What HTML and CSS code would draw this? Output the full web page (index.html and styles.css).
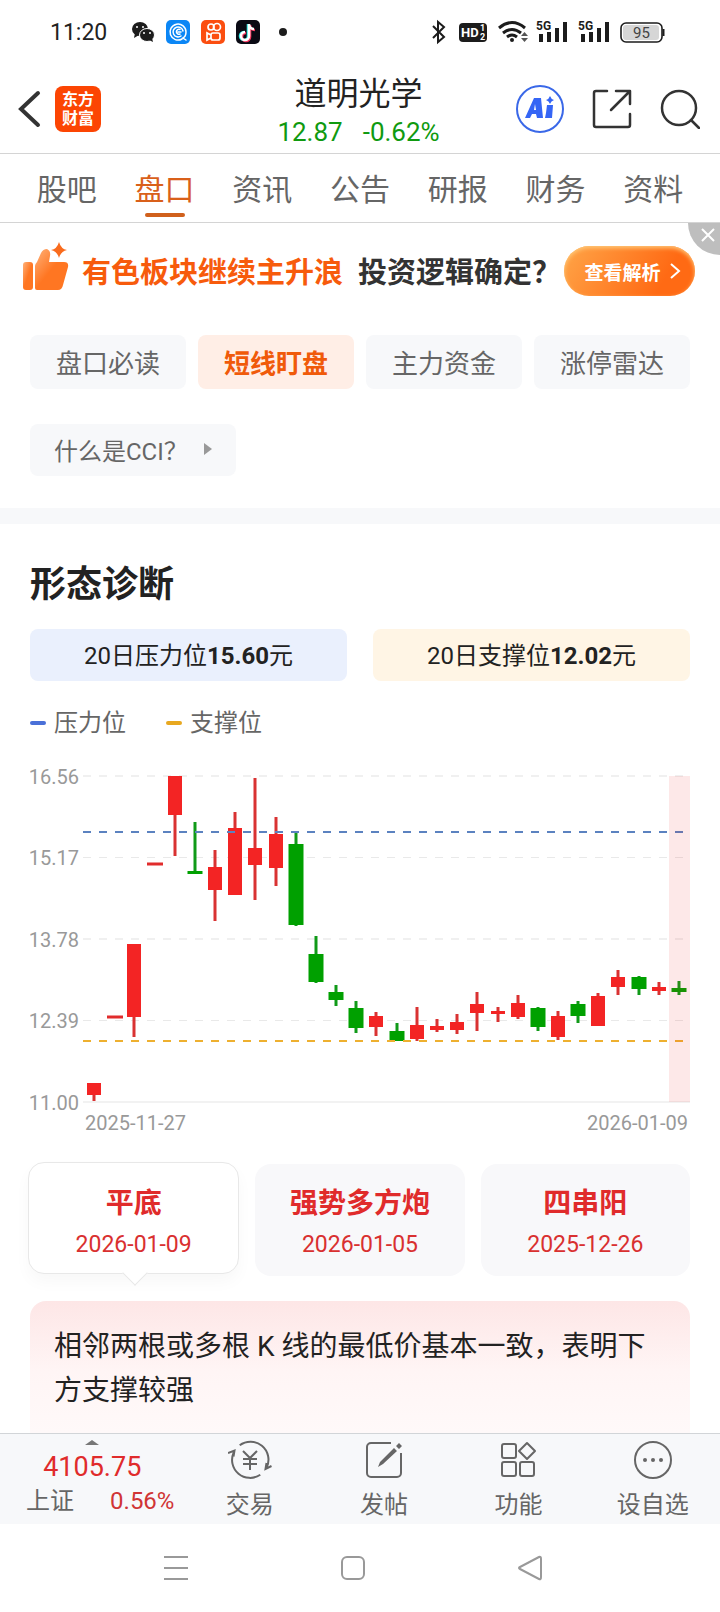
FILE: index.html
```html
<!DOCTYPE html>
<html lang="zh-CN">
<head>
<meta charset="utf-8">
<meta name="viewport" content="width=device-width, initial-scale=1">
<title>道明光学</title>
<link rel="stylesheet" href="styles.css">
</head>
<body>
<div class="app">
  <div class="status">
    <time class="status-time">11:20</time>
    <svg class="status-apps" viewBox="0 0 156 32" width="156" height="32" aria-hidden="true">
      <ellipse cx="8" cy="13" rx="8" ry="7" fill="#1c1c1c"/>
      <path d="M3 17l-1 5 5-3z" fill="#1c1c1c"/>
      <ellipse cx="15" cy="19" rx="7.500" ry="6.500" fill="#1c1c1c" stroke="#fff"/>
      <path d="M17 24l4 2-1-4z" fill="#1c1c1c"/>
      <g fill="#fff"><circle cx="5" cy="11" r="1"/><circle cx="11" cy="11" r="1"/><circle cx="12" cy="17" r="1"/><circle cx="18" cy="17" r="1"/></g>
      <rect x="34" y="4" width="24" height="24" rx="5" fill="#0b86f5"/>
      <g fill="none" stroke="#fff" stroke-width="1.500" stroke-linecap="round">
        <path d="M50 23a8 8 0 1 1 4-7c0 3-1 5-3 6l3 2"/>
        <path d="M49 20a5 5 0 1 1 2-5"/>
        <path d="M48 13.500a2.500 2.500 0 1 0 0 4.500M46 16h3"/>
      </g>
      <rect x="69" y="4" width="24" height="24" rx="5" fill="#fb4e10"/>
      <g fill="none" stroke="#fff" stroke-width="1.700">
        <circle cx="79" cy="11" r="3"/><circle cx="85" cy="11" r="3.500"/>
        <rect x="79" y="17" width="9" height="7" rx="2"/>
        <path d="M79 19l-4-2v7l4-2"/>
      </g>
      <rect x="104" y="4" width="24" height="24" rx="5" fill="#0a0a14"/>
      <g fill="none" stroke-width="2.600">
        <path d="M116 8v12a4 4 0 1 1-4-4M116 8c0 3 2 5 5 5" stroke="#25e4e0"/>
        <path d="M118 9v12a4 4 0 1 1-4-4M118 9c0 3 2 5 5 5" stroke="#f6325c"/>
        <path d="M117 8v12a4 4 0 1 1-4-4M117 8c0 3 2 5 5 5" stroke="#fff"/>
      </g>
      <circle cx="151" cy="16" r="4" fill="#1c1c1c"/>
    </svg>
    <svg class="status-system" viewBox="0 0 236 32" width="236" height="32" role="img" aria-label="蓝牙 HD Wi-Fi 5G 电量 95">
      <path d="M3 10l11 11-6 5V6l6 5L3 22" fill="none" stroke="#1c1c1c" stroke-width="2"/>
      <rect x="29" y="7" width="28" height="19" rx="4" fill="#1c1c1c"/>
      <text x="31" y="21" class="s-hd">HD</text>
      <text x="50" y="15" class="s-sub">1</text><text x="50" y="24" class="s-sub">2</text>
      <g fill="none" stroke="#1c1c1c" stroke-width="3">
        <path d="M69 12q13-11 26 0"/><path d="M73 17q9-7 18 0"/><path d="M77 21q5-4 10 0"/>
      </g>
      <circle cx="82" cy="24" r="2" fill="#1c1c1c"/>
      <path d="M91 20l3.500-4 3.500 4zM91 22l3.500 4 3.500-4z" fill="#555"/>
      <g fill="#1c1c1c">
        <text x="106" y="14" class="s-5g">5G</text>
        <path d="M109 18h4v8h-4zM117 16h4v10h-4zM125 12h4v14h-4zM133 6h4v20h-4z"/>
        <text x="148" y="14" class="s-5g">5G</text>
        <path d="M151 18h4v8h-4zM159 16h4v10h-4zM167 12h4v14h-4zM175 6h4v20h-4z"/>
      </g>
      <rect x="191" y="7" width="41" height="19" rx="5" fill="#fff" stroke="#1c1c1c" stroke-width="1.600"/>
      <rect x="193" y="9" width="36" height="15" rx="3" fill="#d6d6d6"/>
      <path d="M233.500 13v7" stroke="#1c1c1c" stroke-width="2"/>
      <text x="203" y="22" class="s-bat">95</text>
    </svg>
  </div>

  <header class="header">
    <div class="header-side">
      <button class="icon-btn" aria-label="返回">
        <svg viewBox="0 0 24 38" width="24" height="38"><path d="M21 3L4 19l17 16" fill="none" stroke="#333" stroke-width="4" stroke-linecap="round"/></svg>
      </button>
      <a class="logo" href="#"><span>东方</span><span>财富</span></a>
    </div>
    <div class="stock">
      <h1 class="stock-name">道明光学</h1>
      <p class="stock-quote"><span>12.87</span><span>-0.62%</span></p>
    </div>
    <div class="header-side header-actions">
      <button class="icon-btn" aria-label="Ai">
        <svg viewBox="0 0 48 48" width="48" height="48">
          <circle cx="24" cy="24" r="23" fill="#fff" stroke="#3a68e8" stroke-width="2"/>
          <path d="M9 33L18 13h7l2 20h-6l-1-4h-4l-2 4zM18 25h2l-1-6z" fill="#3565f5" fill-rule="evenodd"/>
          <path d="M31 20h6l-1 13h-7l1-5z" fill="#3565f5"/>
          <path d="M34 11q1 3 4 4-3 1-4 4-1-3-4-4 3-1 4-4z" fill="#3565f5"/>
        </svg>
      </button>
      <button class="icon-btn" aria-label="分享">
        <svg viewBox="0 0 40 40" width="40" height="40" fill="none" stroke="#333" stroke-width="2.500" stroke-linecap="round" stroke-linejoin="round">
          <path d="M15 2H4a2 2 0 0 0-2 2v32a2 2 0 0 0 2 2h32a2 2 0 0 0 2-2V25M24 2h14v13M37 3L19 21"/>
        </svg>
      </button>
      <button class="icon-btn" aria-label="搜索">
        <svg viewBox="0 0 40 40" width="40" height="40" fill="none" stroke="#333" stroke-width="2.500" stroke-linecap="round">
          <circle cx="19" cy="19" r="17"/><path d="M31 31l8 8"/>
        </svg>
      </button>
    </div>
  </header>

  <nav class="tabs">
    <a class="tab" href="#">股吧</a>
    <a class="tab tab-on" href="#">盘口</a>
    <a class="tab" href="#">资讯</a>
    <a class="tab" href="#">公告</a>
    <a class="tab" href="#">研报</a>
    <a class="tab" href="#">财务</a>
    <a class="tab" href="#">资料</a>
  </nav>

  <section class="banner">
    <svg class="banner-icon" viewBox="0 0 48 50" width="48" height="50" aria-hidden="true">
      <defs>
        <linearGradient id="thumb" x1="0" y1="0" x2="1" y2="1"><stop offset="0" stop-color="#ffb27a"/><stop offset=".5" stop-color="#ff7622"/></linearGradient>
      </defs>
      <rect x="1" y="21" width="10" height="28" rx="3" fill="url(#thumb)"/>
      <path d="M13 25q0-2 2-4l4-9q2-4 6-4 4 2 3 7l-1 6h15q5 0 4 5l-5 18q-1 5-5 5H15q-2 0-2-2z" fill="url(#thumb)"/>
      <path d="M37 1q2 7 8 8-6 1-8 8-2-7-8-8 6-1 8-8z" fill="#f96b1d"/>
    </svg>
    <p class="banner-text"><strong class="banner-hot">有色板块继续主升浪</strong><strong>投资逻辑确定？</strong></p>
    <button class="banner-btn">查看解析
      <svg viewBox="0 0 12 16" width="12" height="16" fill="none" stroke="#fff" stroke-width="2" aria-hidden="true"><path d="M2 1l8 7-8 7"/></svg>
    </button>
    <button class="banner-close" aria-label="关闭">
      <svg viewBox="0 0 14 14" width="14" height="14" stroke="#fff" stroke-width="2"><path d="M1 1l12 12M13 1L1 13"/></svg>
    </button>
  </section>

  <main class="main">
    <div class="pills">
      <button class="pill">盘口必读</button>
      <button class="pill pill-on">短线盯盘</button>
      <button class="pill">主力资金</button>
      <button class="pill">涨停雷达</button>
    </div>
    <button class="question">什么是CCI？
      <svg viewBox="0 0 8 12" width="8" height="12" aria-hidden="true"><path d="M0 0l8 6-8 6z" fill="#999"/></svg>
    </button>

    <section class="diagnosis">
      <h2 class="title">形态诊断</h2>
      <div class="levels">
        <p class="level level-high">20日压力位<b>15.60</b>元</p>
        <p class="level level-low">20日支撑位<b>12.02</b>元</p>
      </div>
      <div class="legend">
        <span class="key key-high">压力位</span>
        <span class="key key-low">支撑位</span>
      </div>

      <svg class="chart" viewBox="0 0 660 380" role="img" aria-label="K线图">
        <g stroke="#e9e9e9" stroke-width="1" stroke-dasharray="8 8">
          <path d="M53 16H660" stroke-width="2" stroke="#f0f0f0"/><path d="M53 97.500H660"/><path d="M53 179H660" stroke-width="2" stroke="#f0f0f0"/><path d="M53 260.500H660"/>
        </g>
        <path d="M53 342H660" stroke="#f2f2f2" stroke-width="2"/>
        <path stroke="#d93232" stroke-width="3" d="M64 335V341M104 257V277M145 55V96M185 90V161M205 52V68M225 18V140M246 57V126M346 252V276M387 247V281M407 259V272M427 254V274M447 232V271M468 247V262M488 235V259M528 251V280M568 233V236M588 210V235M629 222V235"/>
        <path stroke="#f32424" stroke-width="14" d="M64 323V335M104 184V257M145 16V55M185 107V130M205 68V135M225 88V105M246 74V108M346 256V267M387 265V279M407 266V270M427 262V270M447 244V253M468 251V254M488 243V257M528 256V277M568 236V266M588 217V227M629 227V231"/>
        <path stroke="#e12c2c" stroke-width="3" d="M77 257H93M117 104H133"/>
        <path stroke="#109a18" stroke-width="3" d="M165 62V113M266 72V166M286 176V223M306 225V246M326 241V273M367 263V281M508 247V271M548 241V263M609 216V235M649 221V235"/>
        <path stroke="#00a000" stroke-width="15" d="M165 111V114M266 84V165M286 194V222M306 232V240M326 248V268M367 271V281M508 248V267M548 244V256M609 217V229M649 228V232"/>
        <path stroke="#5b82c0" stroke-width="2" stroke-dasharray="8 8" d="M53 72H660"/>
        <path stroke="#eeb030" stroke-width="2" stroke-dasharray="8 8" d="M53 281H660"/>
        <rect x="639" y="16" width="21" height="326" fill="#f02020" fill-opacity=".1"/>
        <g class="axis" text-anchor="end">
          <text x="49" y="24">16.56</text><text x="49" y="105">15.17</text><text x="49" y="187">13.78</text><text x="49" y="268">12.39</text><text x="49" y="350">11.00</text>
          <text x="658" y="370">2026-01-09</text>
        </g>
        <text class="axis" x="55" y="370">2025-11-27</text>
      </svg>

      <div class="patterns">
        <button class="pattern pattern-on"><b>平底</b><time>2026-01-09</time></button>
        <button class="pattern"><b>强势多方炮</b><time>2026-01-05</time></button>
        <button class="pattern"><b>四串阳</b><time>2025-12-26</time></button>
      </div>
      <p class="note">相邻两根或多根 K 线的最低价基本一致，表明下方支撑较强</p>
    </section>
  </main>

  <footer class="toolbar">
    <button class="index">
      <svg class="index-caret" viewBox="0 0 14 5" width="14" height="5" aria-hidden="true"><path d="M0 5l7-5 7 5z" fill="#777"/></svg>
      <span class="index-value">4105.75</span>
      <span class="index-row"><span>上证</span><span class="index-change">0.56%</span></span>
    </button>
    <button class="tool">
      <svg viewBox="0 0 44 40" width="44" height="40" fill="none" stroke="#666" stroke-width="2" aria-hidden="true">
        <path d="M11.700 5.300A18 18 0 0 1 38.700 27.500M32.300 34.700A18 18 0 0 1 5.700 12.400M0 13l6.500-2.500-1 6M43.500 26l-6 3 1-6"/>
        <path d="M15 11l7 7 7-7M22 18v12M15 19h14M15 24h14"/>
      </svg>交易
    </button>
    <button class="tool">
      <svg viewBox="0 0 40 40" width="40" height="40" fill="none" stroke="#666" stroke-width="2" aria-hidden="true">
        <path d="M27 3H7a4 4 0 0 0-4 4v26a4 4 0 0 0 4 4h26a4 4 0 0 0 4-4V13"/>
        <path d="M14 27l2-5L30 8l3 3-14 13zM32 6l3-3 3 3-3 3z" fill="#666" stroke="none"/>
      </svg>发帖
    </button>
    <button class="tool">
      <svg viewBox="0 0 40 40" width="40" height="40" fill="none" stroke="#666" stroke-width="2" stroke-linejoin="round" aria-hidden="true">
        <rect x="4" y="4" width="14" height="14" rx="2"/><rect x="4" y="22" width="14" height="14" rx="2"/><rect x="22" y="22" width="14" height="14" rx="2"/><path d="M29 3l8 8-8 8-8-8z"/>
      </svg>功能
    </button>
    <button class="tool">
      <svg viewBox="0 0 40 40" width="40" height="40" aria-hidden="true">
        <circle cx="20" cy="20" r="18" fill="none" stroke="#666" stroke-width="2"/>
        <g fill="#666"><circle cx="12" cy="20" r="2"/><circle cx="20" cy="20" r="2"/><circle cx="28" cy="20" r="2"/></g>
      </svg>设自选
    </button>
  </footer>

  <nav class="sysnav">
    <button class="icon-btn" aria-label="菜单"><svg viewBox="0 0 26 26" width="26" height="26" fill="none" stroke="#999" stroke-width="2"><path d="M1 2h24M1 13h24M1 24h24"/></svg></button>
    <button class="icon-btn" aria-label="主页"><svg viewBox="0 0 26 26" width="26" height="26" fill="none" stroke="#999" stroke-width="2"><rect x="2" y="2" width="22" height="22" rx="5"/></svg></button>
    <button class="icon-btn" aria-label="后退"><svg viewBox="0 0 26 26" width="26" height="26" fill="none" stroke="#999" stroke-width="2"><path d="M3 12L22 2q2-1 2 2v18q0 3-2 2L3 14q-2-1 0-2z"/></svg></button>
  </nav>
</div>
</body>
</html>
```
FILE: styles.css
```css
* {
  box-sizing: border-box;
}

body {
  margin: 0;
  background: #fff;
  color: #222;
  font-family: Roboto, "Noto Sans CJK SC", sans-serif;
  font-size: 24px;
  font-weight: 400;
}

h1, h2, p {
  margin: 0;
}

button {
  border: 0;
  padding: 0;
  background: none;
  color: inherit;
  font: inherit;
}

b, strong {
  font-weight: 700;
}

a {
  color: inherit;
  text-decoration: none;
}

svg {
  display: block;
  flex: none;
}

.app {
  display: flex;
  flex-direction: column;
  min-height: 100vh;
}

/* Phone status bar */
.status {
  display: flex;
  align-items: center;
  height: 64px;
  padding: 0 54px 0 50px;
}

.status-time {
  width: 82px;
  font-size: 23px;
}

.status-system {
  margin-left: auto;
}

.s-hd, .s-sub {
  fill: #fff;
  font-size: 13px;
  font-weight: 700;
}

.s-sub {
  font-size: 9px;
}

.s-5g {
  font-size: 12px;
  font-weight: 700;
}

.s-bat {
  fill: #444;
  font-size: 15px;
}

/* Header */
.header {
  display: flex;
  align-items: center;
  height: 90px;
  padding: 0 20px 0 17px;
  border-bottom: 1px solid #d4d4d4;
}

.header-side {
  display: flex;
  flex: 1;
  align-items: center;
  gap: 14px;
}

.header-actions {
  justify-content: flex-end;
  gap: 28px;
}

.logo {
  display: flex;
  flex-direction: column;
  align-items: center;
  justify-content: center;
  width: 46px;
  height: 46px;
  border-radius: 8px;
  background: #fc4503;
  color: #fff;
  font-size: 16px;
  font-weight: 700;
  line-height: 19px;
}

.stock {
  padding-top: 2px;
  text-align: center;
}

.stock-name {
  font-size: 32px;
  font-weight: 400;
  line-height: 44px;
}

.stock-quote {
  display: flex;
  gap: 20px;
  color: #109a10;
  font-size: 26px;
  line-height: 32px;
}

/* Section tabs */
.tabs {
  display: flex;
  height: 69px;
  padding: 0 18px;
  border-bottom: 1px solid #d4d4d4;
}

.tab {
  position: relative;
  flex: 1;
  color: #666;
  font-size: 30px;
  line-height: 72px;
  text-align: center;
}

.tab-on {
  color: #d9601a;
}

.tab-on::after {
  content: "";
  position: absolute;
  bottom: 5px;
  left: calc(50% - 20px);
  width: 40px;
  height: 4px;
  border-radius: 2px;
  background: #d0601c;
}

/* Promotion banner */
.banner {
  position: relative;
  display: flex;
  align-items: center;
  height: 96px;
  padding: 0 25px 0 22px;
}

.banner-icon {
  margin-bottom: 10px;
}

.banner-text {
  display: flex;
  gap: 15px;
  margin-left: 12px;
  padding-bottom: 3px;
  color: #333;
  font-size: 29px;
  white-space: nowrap;
}

.banner-hot {
  color: #f75b0c;
}

.banner-btn {
  display: flex;
  align-items: center;
  justify-content: center;
  gap: 8px;
  width: 131px;
  height: 50px;
  margin-left: auto;
  padding-left: 6px;
  border-radius: 25px;
  background: linear-gradient(120deg, #ffa548, #ff6a14 75%);
  box-shadow: inset 0 2px 4px #ffc97a;
  color: #fff;
  font-size: 19px;
  font-weight: 700;
}

.banner-close {
  position: absolute;
  top: 0;
  right: 0;
  display: grid;
  place-items: center;
  width: 32px;
  height: 32px;
  padding: 0 0 8px 8px;
  border-bottom-left-radius: 32px;
  background: #bebebe;
}

/* Content */
.main {
  display: flex;
  flex: 1;
  flex-direction: column;
  align-items: flex-start;
  padding-top: 16px;
}

.pills {
  display: grid;
  grid-template-columns: repeat(4, 1fr);
  gap: 12px;
  align-self: stretch;
  padding: 0 30px;
}

.pill {
  height: 54px;
  padding-bottom: 2px;
  border-radius: 8px;
  background: #f7f8fa;
  color: #666;
  font-size: 26px;
}

.pill-on {
  background: #ffeee6;
  color: #f05a0a;
  font-weight: 700;
}

.question {
  display: flex;
  align-items: center;
  gap: 16px;
  height: 52px;
  margin: 35px 30px 32px;
  padding: 0 24px 2px;
  border-radius: 8px;
  background: #f7f8fa;
  color: #666;
}

.diagnosis {
  display: flex;
  flex: 1;
  flex-direction: column;
  align-self: stretch;
  padding: 35px 30px 0;
  border-top: 16px solid #f7f8fa;
}

.title {
  font-size: 36px;
  font-weight: 700;
  line-height: 52px;
}

.levels {
  display: grid;
  grid-template-columns: 1fr 1fr;
  gap: 26px;
  margin-top: 18px;
}

.level {
  height: 52px;
  border-radius: 8px;
  line-height: 54px;
  text-align: center;
}

.level-high {
  background: #eaf0fd;
}

.level-low {
  background: #fff5e5;
}

.legend {
  display: flex;
  gap: 40px;
  margin-top: 24px;
  color: #666;
  line-height: 36px;
}

.key {
  display: flex;
  align-items: center;
  gap: 8px;
}

.key::before {
  content: "";
  width: 16px;
  height: 4px;
  border-radius: 2px;
  background: #4a70d8;
}

.key-low::before {
  background: #e8a820;
}

.chart {
  width: 100%;
  margin-top: 19px;
}

.axis {
  fill: #999;
  font-size: 20px;
}

.patterns {
  display: grid;
  grid-template-columns: repeat(3, 1fr);
  gap: 16px;
  margin-top: 24px;
}

.pattern {
  position: relative;
  display: flex;
  flex-direction: column;
  align-items: center;
  height: 112px;
  padding-top: 19px;
  border-radius: 16px;
  background: #f8f8fa;
  color: #d93030;
  font-size: 23px;
  line-height: 41px;
}

.pattern b {
  color: #e02b2b;
  font-size: 28px;
}

.pattern-on {
  margin: -2px 0 2px -2px;
  padding-top: 20px;
  border: 1px solid #e8e8e8;
  background: #fff;
  box-shadow: 0 8px 16px #00000008;
}

.pattern-on::after {
  content: "";
  position: absolute;
  bottom: -9px;
  left: calc(50% - 8px);
  width: 17px;
  height: 17px;
  border: solid #e8e8e8;
  border-width: 0 1px 1px 0;
  background: #fff;
  transform: rotate(45deg);
}

.note {
  flex: 1;
  margin-top: 25px;
  padding: 24px 24px 20px;
  border-radius: 16px 16px 0 0;
  background: linear-gradient(#fde6e6, #fff5f5 70px, #fff9f9);
  font-size: 28px;
  line-height: 44px;
}

/* Bottom toolbar */
.toolbar {
  display: grid;
  grid-template-columns: 182fr repeat(4, 134fr);
  height: 91px;
  border-top: 1px solid #d2d5d8;
  background: #f7f8fa;
  color: #666;
}

.index, .tool {
  display: flex;
  flex-direction: column;
  align-items: center;
}

.index {
  padding: 6px 0 0 2px;
}

.index-value {
  margin-top: 5px;
  color: #e02b2b;
  font-size: 27px;
  line-height: 34px;
}

.index-row {
  display: flex;
  gap: 36px;
  margin-left: 16px;
  line-height: 34px;
}

.index-change {
  color: #d03535;
}

.tool {
  gap: 7px;
  padding-top: 6px;
  line-height: 36px;
}

/* Phone navigation */
.sysnav {
  display: grid;
  grid-template-columns: repeat(3, 1fr);
  place-items: center;
  height: 88px;
  padding: 0 101px 0 87px;
}
```
